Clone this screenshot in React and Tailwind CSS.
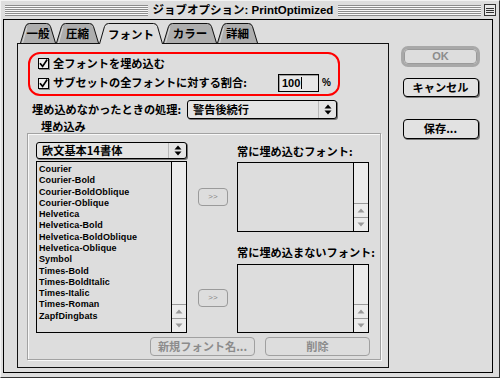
import React from 'react';

const jp = "font-['Noto_Sans_CJK_JP','Liberation_Sans',sans-serif]";
const latin = "font-['Liberation_Sans','Noto_Sans_CJK_JP',sans-serif]";

const fonts = [
  'Courier',
  'Courier-Bold',
  'Courier-BoldOblique',
  'Courier-Oblique',
  'Helvetica',
  'Helvetica-Bold',
  'Helvetica-BoldOblique',
  'Helvetica-Oblique',
  'Symbol',
  'Times-Bold',
  'Times-BoldItalic',
  'Times-Italic',
  'Times-Roman',
  'ZapfDingbats',
];

const Stripes = ({ className }) => (
  <div
    className={`h-[11px] bg-[repeating-linear-gradient(to_bottom,#8c8c8c_0px,#8c8c8c_1px,#f8f8f8_1px,#f8f8f8_2px)] ${className}`}
  />
);

const Tab = ({ w, className, label, active }) => {
  const h = active ? 21 : 20;
  const d = `M0.5 ${h} L5.5 3.5 Q6.5 0.5 9.5 0.5 L${w - 9.5} 0.5 Q${w - 6.5} 0.5 ${w - 5.5} 3.5 L${w - 0.5} ${h}`;
  return (
    <div className={`relative flex items-center justify-center shrink-0 ${className} ${active ? 'h-[21px] -mb-px z-10' : 'h-[20px]'}`}>
      <svg className="absolute inset-0" width={w} height={h} viewBox={`0 0 ${w} ${h}`}>
        <path d={d} fill={active ? '#dddddd' : '#aeaeae'} stroke="#111" strokeWidth="1" />
        {!active && <path d={`M2.5 ${h} L6.8 4.5`} stroke="#d8d8d8" strokeWidth="1" />}
      </svg>
      <span className={`relative text-[11.5px] font-bold leading-none pt-[2px] whitespace-nowrap ${jp}`}>{label}</span>
    </div>
  );
};

const Check = () => (
  <span className="w-[11px] h-[11px] border border-black bg-[#eeeeee] shadow-[1px_1px_0_#8a8a8a] flex items-center justify-center shrink-0">
    <svg width="9" height="9" viewBox="0 0 9 9">
      <path d="M1 4.2 L3.6 7.4 L8.2 0.6" fill="none" stroke="#000" strokeWidth="1.7" />
    </svg>
  </span>
);

const UpDown = () => (
  <svg width="8" height="11" viewBox="0 0 8 11">
    <path d="M4 0.5 L7.5 4.5 L0.5 4.5 Z" fill="#000" />
    <path d="M4 10.5 L7.5 6.5 L0.5 6.5 Z" fill="#000" />
  </svg>
);

const Popup = ({ className, label }) => (
  <div className={`flex border border-black rounded-[3px] bg-[#e4e4e4] shadow-[1px_1px_0_#777] ${className}`}>
    <span className={`flex-1 flex items-center pl-[5px] text-[11.2px] font-bold leading-none whitespace-nowrap ${jp}`}>{label}</span>
    <span className="w-[18px] border-l border-[#b8b8b8] flex items-center justify-center">
      <UpDown />
    </span>
  </div>
);

const ScrollArrows = () => (
  <div className="flex flex-col">
    <div className="h-[14px] border-t border-[#9a9a9a] flex items-center justify-center">
      <svg width="8" height="5" viewBox="0 0 8 5"><path d="M4 0.5 L7.5 4.5 L0.5 4.5 Z" fill="#9a9a9a" /></svg>
    </div>
    <div className="h-[14px] border-t border-[#9a9a9a] flex items-center justify-center">
      <svg width="8" height="5" viewBox="0 0 8 5"><path d="M4 4.5 L7.5 0.5 L0.5 0.5 Z" fill="#9a9a9a" /></svg>
    </div>
  </div>
);

const ListBox = ({ className, items = [] }) => (
  <div className={`flex border border-black bg-[#dddddd] ${className}`}>
    <div className="flex-1 pl-[2px] pt-[2px] border-r border-black">
      {items.map((f) => (
        <div key={f} className={`text-[9px] leading-[11.3px] font-bold tracking-[0.1px] ${latin}`}>
          {f}
        </div>
      ))}
    </div>
    <div className="w-[14px] bg-[#ececec] flex flex-col justify-end">
      <ScrollArrows />
    </div>
  </div>
);

const SmallButton = ({ className }) => (
  <div className={`w-[30px] h-[18px] border border-[#9a9a9a] rounded-[4px] flex items-center justify-center text-[8px] text-[#888] ${latin} ${className}`}>
    &gt;&gt;
  </div>
);

const MacButton = ({ className, children }) => (
  <div className={`w-[76px] border border-black rounded-[4px] bg-[#e2e2e2] shadow-[1px_1px_0_#7a7a7a] flex items-center justify-center text-[11.2px] font-bold leading-none whitespace-nowrap ${jp} ${className}`}>
    {children}
  </div>
);

const DimButton = ({ className, children }) => (
  <div className={`w-[105px] h-[19px] border border-[#a0a0a0] rounded-[4px] flex items-center justify-center text-[11.2px] font-bold leading-none text-[#8c8c8c] whitespace-nowrap ${jp} ${className}`}>
    {children}
  </div>
);

export default function App() {
  return (
    <div className="w-[500px] h-[378px] bg-[#dddddd] border-t border-l border-[#f2f2f2] border-b border-r border-b-[#333] border-r-[#333] flex flex-col overflow-hidden text-black">
      {/* title bar */}
      <div className="h-[18px] flex items-center pl-[4px] pr-[3px]">
        <Stripes className="flex-1" />
        <span className={`px-[5px] text-[11.5px] font-bold leading-none whitespace-nowrap ${jp}`}>
          ジョブオプション<span className={latin}>: PrintOptimized</span>
        </span>
        <Stripes className="flex-1" />
        <div className="ml-[3px] w-[12px] h-[12px] border border-[#333] bg-[#e8e8e8] flex flex-col justify-center gap-[1px] px-[1px]">
          <div className="h-[1px] bg-[#333]" />
          <div className="h-[1px] bg-[#333]" />
          <div className="h-[1px] bg-[#333]" />
        </div>
      </div>

      {/* content */}
      <div className="ml-[2px] w-[490px] h-[354px] border border-black flex">
        <div className="ml-[13px] w-[372px] flex flex-col pt-[3px]">
          <div className="flex items-end h-[20px] pl-[3px]">
            <Tab w={36} className="w-[36px]" label="一般" />
            <Tab w={43} className="w-[43px]" label="圧縮" />
            <Tab w={64} className="w-[64px]" label="フォント" active />
            <Tab w={54} className="w-[54px]" label="カラー" />
            <Tab w={41} className="w-[41px]" label="詳細" />
          </div>

          <div className="h-[325px] border border-[#111] bg-[#dddddd] flex flex-col">
            {/* red highlight */}
            <div className="ml-[10px] mt-[8px] w-[312px] h-[44px] border-2 border-[#ff0000] rounded-[12px] flex flex-col">
              <div className="h-[19px] flex items-center pl-[8px] gap-[4px]">
                <Check />
                <span className={`text-[11.2px] font-bold leading-none whitespace-nowrap ${jp}`}>全フォントを埋め込む</span>
              </div>
              <div className="h-[20px] flex items-center pl-[8px] gap-[4px]">
                <Check />
                <span className={`w-[221px] text-[11.2px] font-bold leading-none whitespace-nowrap ${jp}`}>
                  サブセットの全フォントに対する割合:
                </span>
                <div className="w-[41px] h-[18px] border border-black bg-[#e8e8e8] shadow-[inset_1px_1px_0_#a0a0a0] flex items-center pl-[3px]">
                  <span className={`text-[11px] font-bold leading-none ${latin}`}>100</span>
                  <span className="w-px h-[12px] bg-black ml-[1px]" />
                </div>
                <span className={`ml-[-1px] text-[10px] font-bold leading-none ${latin}`}>%</span>
              </div>
            </div>

            {/* fallback handling */}
            <div className="mt-[4px] h-[19px] flex items-center pl-[14px]">
              <span className={`w-[155px] text-[11.2px] font-bold leading-none whitespace-nowrap ${jp}`}>埋め込めなかったときの処理:</span>
              <Popup className="w-[150px] h-[19px]" label="警告後続行" />
            </div>

            <div className={`mt-[1px] h-[13px] pl-[23px] flex items-center text-[11.2px] font-bold leading-none ${jp}`}>
              埋め込み
            </div>

            {/* embedding group */}
            <div className="ml-[9px] w-[354px] h-[227px] border border-[#a2a2a2] shadow-[inset_1px_1px_0_#f8f8f8,1px_1px_0_#f8f8f8] flex flex-col">
              <div className="h-[199px] flex">
                <div className="ml-[8px] w-[151px] flex flex-col pt-[8px]">
                  <Popup className="h-[17px]" label="欧文基本14書体" />
                  <ListBox className="mt-[2px] h-[173px]" items={fonts} />
                </div>

                <div className="ml-[11px] flex flex-col pt-[54px]">
                  <SmallButton />
                  <SmallButton className="mt-[83px]" />
                </div>

                <div className="ml-[9px] w-[132px] flex flex-col pt-[11px]">
                  <div className={`h-[14px] flex items-center text-[11.2px] font-bold leading-none whitespace-nowrap ${jp}`}>
                    常に埋め込むフォント:
                  </div>
                  <ListBox className="mt-[3px] h-[70px]" />
                  <div className={`mt-[14px] h-[14px] flex items-center text-[11.2px] font-bold leading-none whitespace-nowrap ${jp}`}>
                    常に埋め込まないフォント:
                  </div>
                  <ListBox className="mt-[4px] h-[69px]" />
                </div>
              </div>

              <div className="mt-[4px] flex justify-end gap-[10px] pr-[10px]">
                <DimButton>新規フォント名...</DimButton>
                <DimButton>削除</DimButton>
              </div>
            </div>
          </div>
        </div>

        {/* right buttons */}
        <div className="ml-[12px] w-[79px] flex flex-col items-center pt-[26px]">
          <div className="w-[79px] h-[21px] border-[3px] border-[#a8a8a8] rounded-[7px] flex items-center justify-center">
            <div className={`w-full h-full border border-[#9a9a9a] rounded-[4px] flex items-center justify-center text-[11px] font-bold text-[#8c8c8c] leading-none ${latin}`}>
              OK
            </div>
          </div>
          <MacButton className="mt-[11px] h-[19px]">キャンセル</MacButton>
          <MacButton className="mt-[22px] h-[20px]">保存...</MacButton>
        </div>
      </div>
    </div>
  );
}
